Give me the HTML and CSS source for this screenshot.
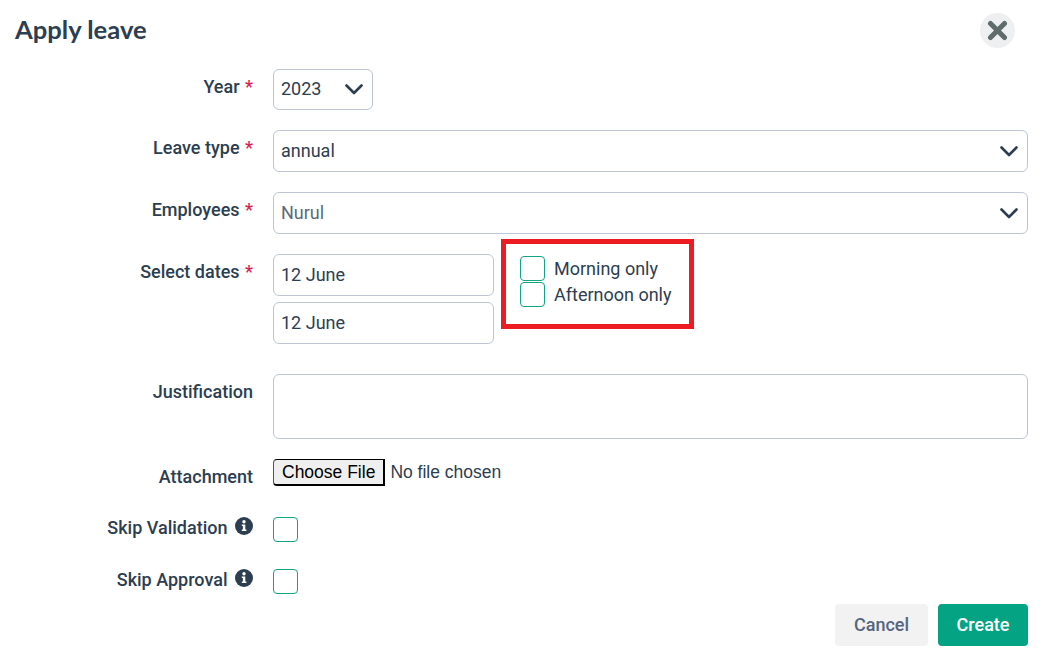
FILE: index.html
```html
<!DOCTYPE html>
<html lang="en">
<head>
<meta charset="utf-8">
<title>Apply leave</title>
<link rel="stylesheet" href="styles.css">
</head>
<body>
<div class="modal">
  <header class="head">
    <h1 class="title">Apply leave</h1>
    <button class="close" type="button" aria-label="Close">
      <svg width="21" height="21" viewBox="0 0 21 21"><path d="M3.5 3.5 17.5 17.5M17.5 3.5 3.5 17.5" stroke="#5f6b6d" stroke-width="5" stroke-linecap="round" fill="none"/></svg>
    </button>
  </header>
  <form class="form">
    <div class="row">
      <label class="label">Year <span class="req">*</span></label>
      <div class="select select-year"><span>2023</span>
        <svg class="chev" width="18" height="11" viewBox="0 0 18 11"><path d="M1.5 1.5 9 9 16.5 1.5" stroke="#2c3e50" stroke-width="2.6" stroke-linecap="round" stroke-linejoin="round" fill="none"/></svg>
      </div>
    </div>
    <div class="row">
      <label class="label">Leave type <span class="req">*</span></label>
      <div class="select select-full"><span>annual</span>
        <svg class="chev" width="18" height="11" viewBox="0 0 18 11"><path d="M1.5 1.5 9 9 16.5 1.5" stroke="#2c3e50" stroke-width="2.6" stroke-linecap="round" stroke-linejoin="round" fill="none"/></svg>
      </div>
    </div>
    <div class="row">
      <label class="label">Employees <span class="req">*</span></label>
      <div class="select select-full muted"><span>Nurul</span>
        <svg class="chev" width="18" height="11" viewBox="0 0 18 11"><path d="M1.5 1.5 9 9 16.5 1.5" stroke="#2c3e50" stroke-width="2.6" stroke-linecap="round" stroke-linejoin="round" fill="none"/></svg>
      </div>
    </div>
    <div class="row row-dates">
      <label class="label">Select dates <span class="req">*</span></label>
      <div class="dates">
        <div class="date">12 June</div>
        <div class="date">12 June</div>
      </div>
      <div class="mark">
        <div class="check-line"><span class="box"></span><span>Morning only</span></div>
        <div class="check-line"><span class="box"></span><span>Afternoon only</span></div>
      </div>
    </div>
    <div class="row row-just">
      <label class="label">Justification</label>
      <div class="textarea"></div>
    </div>
    <div class="row row-file">
      <label class="label">Attachment</label>
      <div class="file"><span class="file-btn">Choose File</span><span class="file-text">No file chosen</span></div>
    </div>
    <div class="row row-check">
      <label class="label">Skip Validation
        <svg class="info" width="18" height="18" viewBox="0 0 18 18"><circle cx="9" cy="9" r="9" fill="#2c3e50"/><circle cx="9" cy="4.8" r="1.7" fill="#fff"/><path d="M6.8 7.5H10.3V12.4H11.4V14H6.8V12.4H7.9V9.1H6.8Z" fill="#fff"/></svg>
      </label>
      <span class="box"></span>
    </div>
    <div class="row row-check">
      <label class="label">Skip Approval
        <svg class="info" width="18" height="18" viewBox="0 0 18 18"><circle cx="9" cy="9" r="9" fill="#2c3e50"/><circle cx="9" cy="4.8" r="1.7" fill="#fff"/><path d="M6.8 7.5H10.3V12.4H11.4V14H6.8V12.4H7.9V9.1H6.8Z" fill="#fff"/></svg>
      </label>
      <span class="box"></span>
    </div>
    <div class="actions">
      <button class="btn btn-cancel" type="button">Cancel</button>
      <button class="btn btn-create" type="button">Create</button>
    </div>
  </form>
</div>
</body>
</html>
```
FILE: styles.css
```css
* { box-sizing: border-box; }
html, body { margin: 0; padding: 0; background: #fff; }
body { font-family: Roboto, sans-serif; font-size: 18px; color: #2c3e50; overflow: hidden; }
.modal { width: 1048px; height: 657px; padding: 13px 20px 0 15px; }
.head { display: flex; justify-content: space-between; align-items: center; height: 35px; }
.title { margin: 0 0 2px; font: 700 25.6px/31px Lato, sans-serif; color: #2c3e50; }
.close { width: 35px; height: 35px; margin-right: 13px; padding: 0; border: 0; border-radius: 50%; background: #edeff1; display: flex; align-items: center; justify-content: center; }
.form { margin-top: 21px; display: flex; flex-direction: column; gap: 20px; }
.row { display: flex; gap: 20px; align-items: flex-start; }
.label { width: 238px; flex: none; text-align: right; font-weight: 500; line-height: 24px; padding-top: 6px; }
.req { color: #d9214e; margin-left: 1px; }
.select, .date { display: flex; align-items: center; justify-content: space-between; height: 42px; padding: 0 7px 2px; border: 1px solid #bcc6d3; border-radius: 6px; background: #fff; }
.select-year { width: 100px; height: 41px; padding-right: 9px; }
.select-full { width: 755px; padding-right: 9px; }
.muted span { color: #5a6a7a; }
.chev { flex: none; margin-top: 2px; }
.row-dates { gap: 7px; }
.row-dates .label { margin-right: 13px; }
.dates { width: 221px; display: flex; flex-direction: column; gap: 6px; }
.mark { width: 193px; height: 90px; margin-top: -15px; padding: 11px 0 0 14px; border: 5px solid #ed1c24; }
.check-line { display: flex; align-items: center; gap: 9px; height: 26px; }
.box { display: block; flex: none; width: 25px; height: 25px; border: 1px solid #12a584; border-radius: 4px; background: #fff; }
.row-just { margin-top: 10px; }
.textarea { width: 755px; height: 65px; border: 1px solid #bcc6d3; border-radius: 6px; }
.row-file .label { padding-top: 6px; }
.row-file { height: 38px; }
.file { display: flex; align-items: center; font: 17.5px "Liberation Sans", Arial, sans-serif; }
.file-btn { display: block; height: 27px; padding: 0 8px; line-height: 24px; color: #000; background: #efefef; border: 2px solid #000; border-top-width: 1px; border-left-color: #555; border-left-width: 1px; border-radius: 4px 0 0 4px; }
.file-text { margin-left: 5px; }
.row-check .label { padding-top: 0; margin-top: -1px; }
.row-check { height: 32px; }
.info { vertical-align: -1px; margin-left: 3px; }
.actions { display: flex; justify-content: flex-end; gap: 10px; margin-top: -17px; }
.btn { height: 42px; padding: 0 18.5px 2px; border: 0; border-radius: 4px; font: 500 18px Roboto, sans-serif; }
.btn-cancel { padding: 0 19px 2px; background: #f2f2f3; color: #56667f; }
.btn-create { background: #04a383; color: #fff; }
```
